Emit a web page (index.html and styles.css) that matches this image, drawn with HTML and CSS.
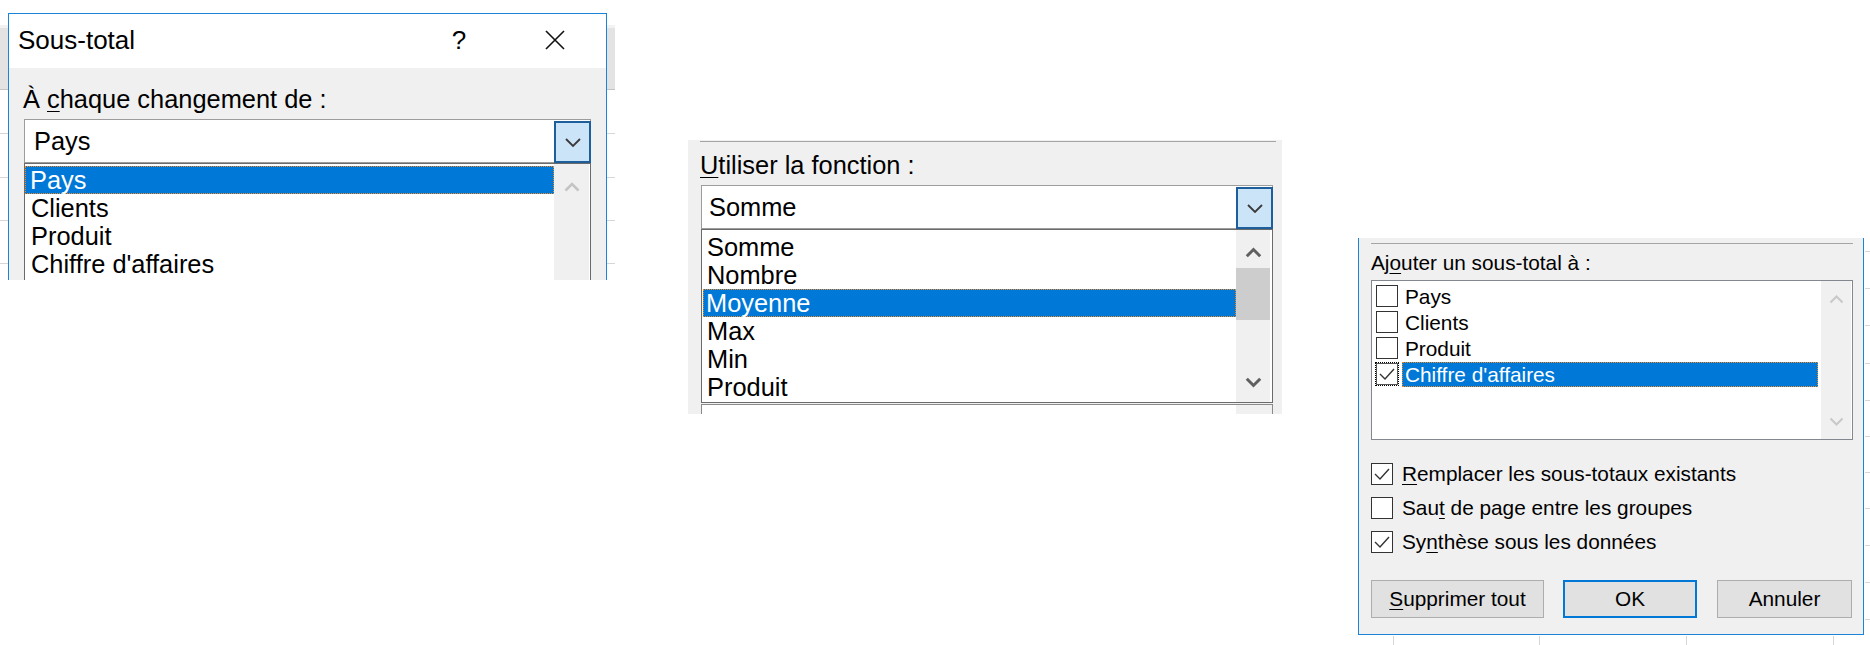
FILE: index.html
```html
<!DOCTYPE html>
<html lang="fr">
<head>
<meta charset="utf-8">
<title>Sous-total</title>
<link rel="stylesheet" href="styles.css">
</head>
<body>
<div class="canvas">

  <!-- Fragment 1 : title and "À chaque changement de" -->
  <div class="shot shot1">
    <div class="dlg1">
      <div class="titlebar">
        <span class="title">Sous-total</span>
        <span class="tbtn help">?</span>
        <span class="tbtn close"><svg width="22" height="22" viewBox="0 0 22 22"><path d="M2 2L20 20M20 2L2 20" stroke="#111" stroke-width="1.6"/></svg></span>
      </div>
      <div class="body1">
        <div class="label lab1">À <u>c</u>haque changement de :</div>
        <div class="combo">
          <span class="combo-text">Pays</span>
          <span class="ddbtn"><svg width="16" height="9" viewBox="0 0 16 9"><path d="M1 1L8 8L15 1" fill="none" stroke="#3a3a3a" stroke-width="1.8"/></svg></span>
        </div>
        <div class="list list1">
          <div class="items">
            <div class="item sel">Pays</div>
            <div class="item">Clients</div>
            <div class="item">Produit</div>
            <div class="item">Chiffre d'affaires</div>
          </div>
          <div class="sbar sbar1">
            <span class="arrow-up"><svg width="16" height="10" viewBox="0 0 16 10"><path d="M1.5 8.5L8 2L14.5 8.5" fill="none" stroke="#c4c4c4" stroke-width="2.6"/></svg></span>
          </div>
        </div>
      </div>
    </div>
  </div>

  <!-- Fragment 2 : "Utiliser la fonction" -->
  <div class="shot shot2">
    <div class="topline"></div>
    <div class="label lab2"><u>U</u>tiliser la fonction :</div>
    <div class="combo">
      <span class="combo-text">Somme</span>
      <span class="ddbtn"><svg width="16" height="9" viewBox="0 0 16 9"><path d="M1 1L8 8L15 1" fill="none" stroke="#3a3a3a" stroke-width="1.8"/></svg></span>
    </div>
    <div class="list list2">
      <div class="items">
        <div class="item">Somme</div>
        <div class="item">Nombre</div>
        <div class="item sel">Moyenne</div>
        <div class="item">Max</div>
        <div class="item">Min</div>
        <div class="item">Produit</div>
      </div>
      <div class="sbar sbar2">
        <span class="abox up"><svg width="17" height="11" viewBox="0 0 17 11"><path d="M1.8 9.2L8.5 2.5L15.2 9.2" fill="none" stroke="#606060" stroke-width="3"/></svg></span>
        <span class="thumb"></span>
        <span class="spacer"></span>
        <span class="abox down"><svg width="17" height="11" viewBox="0 0 17 11"><path d="M1.8 1.8L8.5 8.5L15.2 1.8" fill="none" stroke="#606060" stroke-width="3"/></svg></span>
      </div>
    </div>
    <div class="nextbox"><span class="nextfill"></span><span class="nextbar"></span></div>
  </div>

  <!-- Fragment 3 : "Ajouter un sous-total à" and buttons -->
  <div class="shot shot3">
    <div class="dlg3">
      <div class="topline"></div>
      <div class="label lab3">Aj<u>o</u>uter un sous-total à :</div>
      <div class="checklist">
        <div class="citems">
          <div class="crow"><span class="cbox"></span><span class="ctext">Pays</span></div>
          <div class="crow"><span class="cbox"></span><span class="ctext">Clients</span></div>
          <div class="crow"><span class="cbox"></span><span class="ctext">Produit</span></div>
          <div class="crow csel"><span class="cbox focus"><svg width="22" height="22" viewBox="0 0 22 22"><path d="M4 11L9 16L18 6" fill="none" stroke="#333" stroke-width="1.4"/></svg></span><span class="ctext">Chiffre d'affaires</span></div>
        </div>
        <div class="sbar sbar3">
          <span class="abox3"><svg width="15" height="9" viewBox="0 0 15 9"><path d="M1.5 7.5L7.5 1.5L13.5 7.5" fill="none" stroke="#c8c8c8" stroke-width="2"/></svg></span>
          <span class="spacer"></span>
          <span class="abox3"><svg width="15" height="9" viewBox="0 0 15 9"><path d="M1.5 1.5L7.5 7.5L13.5 1.5" fill="none" stroke="#c8c8c8" stroke-width="2"/></svg></span>
        </div>
      </div>
      <div class="opts">
        <div class="opt"><span class="cbox"><svg width="22" height="22" viewBox="0 0 22 22"><path d="M4 11L9 16L18 6" fill="none" stroke="#333" stroke-width="1.4"/></svg></span><span><u>R</u>emplacer les sous-totaux existants</span></div>
        <div class="opt"><span class="cbox"></span><span>Sau<u>t</u> de page entre les groupes</span></div>
        <div class="opt"><span class="cbox"><svg width="22" height="22" viewBox="0 0 22 22"><path d="M4 11L9 16L18 6" fill="none" stroke="#333" stroke-width="1.4"/></svg></span><span>Sy<u>n</u>thèse sous les données</span></div>
      </div>
      <div class="buttons">
        <span class="btn b-del"><u>S</u>upprimer tout</span>
        <span class="btn b-ok">OK</span>
        <span class="btn b-cancel">Annuler</span>
      </div>
    </div>
  </div>

</div>
</body>
</html>
```

FILE: styles.css
```css
* { box-sizing: border-box; }

html, body {
  margin: 0;
  padding: 0;
  background: #fff;
}

body {
  font-family: "Liberation Sans", Arial, sans-serif;
  font-size: 20.8px;
  color: #000;
}

.canvas {
  position: relative;
  width: 1870px;
  height: 645px;
  overflow: hidden;
  background: #fff;
}

.shot {
  position: absolute;
  overflow: hidden;
}

u {
  text-decoration: underline;
  text-decoration-thickness: 1px;
  text-underline-offset: 3px;
}

/* ---------- fragment 1 ---------- */
.shot1 {
  left: 0;
  top: 0;
  width: 615px;
  height: 280px;
  padding: 13px 0 0 8px;
  font-size: 25.4px;
  background:
    linear-gradient(#d6d6d6, #d6d6d6) 0 133px / 100% 1px no-repeat,
    linear-gradient(#d6d6d6, #d6d6d6) 0 177px / 100% 1px no-repeat,
    linear-gradient(#d6d6d6, #d6d6d6) 0 220px / 100% 1px no-repeat,
    linear-gradient(#d6d6d6, #d6d6d6) 0 263px / 100% 1px no-repeat,
    linear-gradient(#c4c4c4, #c4c4c4) 0 89px / 100% 1px no-repeat,
    linear-gradient(#f2f2f2, #f2f2f2) 0 25px / 100% 3px no-repeat,
    linear-gradient(#e3e3e3, #e3e3e3) 0 25px / 100% 65px no-repeat,
    #fff;
}

.dlg1 {
  width: 599px;
  height: 267px;
  border: 1px solid #1b83d8;
  border-bottom: none;
  background: #f0f0f0;
  display: flex;
  flex-direction: column;
}

.titlebar {
  height: 54px;
  flex: none;
  background: #fff;
  display: flex;
  align-items: center;
  padding: 0 28px 2px 9px;
}

.title {
  flex: 1;
  font-size: 26px;
  line-height: 30px;
}

.tbtn {
  width: 46px;
  height: 40px;
  display: flex;
  align-items: center;
  justify-content: center;
}

.help {
  font-size: 26px;
  margin-right: 50px;
}

.body1 {
  flex: 1;
  padding: 0 15px;
  display: flex;
  flex-direction: column;
}

.label {
  height: 30px;
  line-height: 30px;
  white-space: nowrap;
}

.lab1 {
  margin: 16px 0 0 -1px;
}

.combo {
  height: 44px;
  flex: none;
  margin-top: 5px;
  border: 1px solid #9c9c9c;
  background: #fff;
  display: flex;
}

.combo-text {
  flex: 1;
  display: flex;
  align-items: center;
  padding-left: 9px;
}

.ddbtn {
  width: 37px;
  margin: 1px -1px -1px 0;
  border: 2px solid #1e5f9b;
  background: #cce4f7;
  display: flex;
  align-items: center;
  justify-content: center;
}

.list {
  border: 1px solid #6b6b6b;
  background: #fff;
  display: flex;
  flex: none;
}

.list1 {
  height: 140px;
}

.items {
  flex: 1;
  display: flex;
  flex-direction: column;
}

.list1 .items {
  padding: 2px 0 0 0;
}

.item {
  height: 28px;
  line-height: 26px;
  padding-left: 5px;
  border: 1px solid transparent;
  white-space: nowrap;
}

.item.sel {
  background: #0078d7;
  color: #fff;
  border: 1px dotted #f28a1e;
  padding-left: 4px;
}

.sbar {
  background: #f0f0f0;
  display: flex;
  flex-direction: column;
  align-items: center;
}

.sbar1 {
  width: 35px;
  margin-right: 1px;
}

.arrow-up {
  margin-top: 18px;
  display: flex;
}

/* ---------- fragment 2 ---------- */
.shot2 {
  left: 688px;
  top: 140px;
  width: 594px;
  height: 274px;
  background: #f0f0f0;
  padding: 0 9px 0 13px;
  font-size: 25.4px;
  display: flex;
  flex-direction: column;
}

.topline {
  height: 1px;
  flex: none;
  background: #a5a5a5;
}

.shot2 .topline {
  margin: 1px -3px 0 -1px;
}

.lab2 {
  margin: 8px 0 0 -1px;
}

.shot2 .combo {
  margin-top: 5px;
}

.shot2 .combo-text {
  padding-left: 7px;
}

.list2 {
  height: 174px;
}

.list2 .items {
  padding: 3px 0 0 1px;
}

.list2 .item {
  padding-left: 3px;
}

.list2 .item.sel {
  padding-left: 2px;
}

.sbar2 {
  width: 34px;
  margin-right: 2px;
  align-items: stretch;
}

.abox {
  height: 38px;
  flex: none;
  display: flex;
  align-items: center;
  justify-content: center;
}

.abox.up {
  padding-top: 6px;
}

.abox.down {
  padding-bottom: 2px;
}

.thumb {
  height: 52px;
  flex: none;
  background: #cdcdcd;
}

.spacer {
  flex: 1;
}

.nextbox {
  margin-top: 1px;
  height: 20px;
  flex: none;
  border: 1px solid #8a8a8a;
  border-bottom: none;
  display: flex;
}

.nextfill {
  flex: 1;
  background: #fff;
}

.nextbar {
  width: 36px;
  background: #f0f0f0;
}

/* ---------- fragment 3 ---------- */
.shot3 {
  left: 1358px;
  top: 238px;
  width: 512px;
  height: 407px;
  background:
    linear-gradient(#fff, #fff) 0 0 / 507px 398px no-repeat,
    linear-gradient(#d6d6d6, #d6d6d6) 0 13px / 100% 1px no-repeat,
    linear-gradient(#d6d6d6, #d6d6d6) 0 50px / 100% 1px no-repeat,
    linear-gradient(#d6d6d6, #d6d6d6) 0 87px / 100% 1px no-repeat,
    linear-gradient(#d6d6d6, #d6d6d6) 0 125px / 100% 1px no-repeat,
    linear-gradient(#d6d6d6, #d6d6d6) 0 162px / 100% 1px no-repeat,
    linear-gradient(#d6d6d6, #d6d6d6) 0 198px / 100% 1px no-repeat,
    linear-gradient(#d6d6d6, #d6d6d6) 0 234px / 100% 1px no-repeat,
    linear-gradient(#d6d6d6, #d6d6d6) 0 270px / 100% 1px no-repeat,
    linear-gradient(#d6d6d6, #d6d6d6) 0 307px / 100% 1px no-repeat,
    linear-gradient(#d6d6d6, #d6d6d6) 0 344px / 100% 1px no-repeat,
    linear-gradient(#d6d6d6, #d6d6d6) 0 381px / 100% 1px no-repeat,
    linear-gradient(#d6d6d6, #d6d6d6) 35px 0 / 1px 100% no-repeat,
    linear-gradient(#d6d6d6, #d6d6d6) 181px 0 / 1px 100% no-repeat,
    linear-gradient(#d6d6d6, #d6d6d6) 328px 0 / 1px 100% no-repeat,
    linear-gradient(#d6d6d6, #d6d6d6) 475px 0 / 1px 100% no-repeat,
    #fff;
}

.dlg3 {
  width: 506px;
  height: 397px;
  border: 1px solid #1b83d8;
  border-top: none;
  background: #f0f0f0;
  padding: 0 10px 0 12px;
  display: flex;
  flex-direction: column;
}

.dlg3 .topline {
  margin-top: 5px;
}

.lab3 {
  margin-top: 4px;
}

.checklist {
  margin-top: 2px;
  height: 160px;
  flex: none;
  border: 1px solid #828790;
  background: #fff;
  display: flex;
}

.citems {
  flex: 1;
  padding: 2px 3px 0 4px;
  display: flex;
  flex-direction: column;
}

.crow {
  height: 26px;
  display: flex;
  align-items: center;
}

.cbox {
  width: 22px;
  height: 22px;
  flex: none;
  border: 1px solid #333;
  background: #fff;
  display: flex;
  align-items: center;
  justify-content: center;
  overflow: hidden;
}

.cbox svg {
  flex: none;
}

.crow .cbox {
  margin-right: 4px;
}

.cbox.focus {
  outline: 1px dotted #000;
  outline-offset: 0;
  border-color: #555;
}

.ctext {
  flex: 1;
  height: 25px;
  line-height: 23px;
  padding-left: 2px;
  border: 1px solid transparent;
  white-space: nowrap;
}

.csel .ctext {
  background: #0078d7;
  color: #fff;
  border: 1px dotted #f28a1e;
}

.sbar3 {
  width: 30px;
  margin-right: 1px;
}

.abox3 {
  height: 36px;
  display: flex;
  align-items: center;
  justify-content: center;
}

.opts {
  margin-top: 17px;
  display: flex;
  flex-direction: column;
}

.opt {
  height: 34px;
  display: flex;
  align-items: center;
  white-space: nowrap;
}

.opt .cbox {
  margin-right: 9px;
}

.buttons {
  margin-top: 21px;
  display: flex;
}

.btn {
  height: 38px;
  border: 1px solid #adadad;
  background: #e1e1e1;
  display: flex;
  align-items: center;
  justify-content: center;
  white-space: nowrap;
}

.b-del {
  width: 173px;
}

.b-ok {
  width: 134px;
  margin-left: 19px;
  border: 2px solid #0078d7;
}

.b-cancel {
  width: 135px;
  margin-left: 20px;
}
```
